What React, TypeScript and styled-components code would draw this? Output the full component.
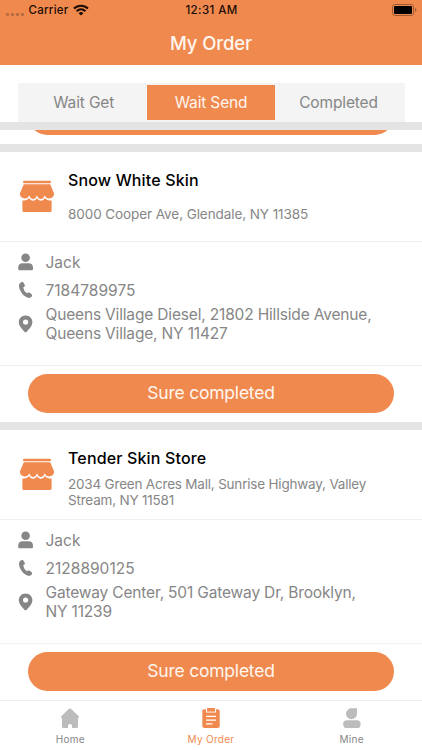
import React from "react";
import styled, { createGlobalStyle } from "styled-components";

const ORANGE = "#f0894e";
const GREY = "#868686";

const GlobalStyle = createGlobalStyle`
  * { box-sizing: border-box; }
  body { margin: 0; background: #fff; font-family: Inter, "Liberation Sans", sans-serif; }
`;

const Screen = styled.div`
  width: 422px;
  height: 750px;
  display: flex;
  flex-direction: column;
  overflow: hidden;
  background: #fff;
`;

const Header = styled.header`
  flex: none;
  height: 65px;
  background: ${ORANGE};
`;

const StatusBar = styled.div`
  height: 20px;
  padding: 0 5px 0 6px;
  display: grid;
  grid-template-columns: 1fr auto 1fr;
  align-items: center;
  font-size: 11.5px;
  font-weight: 500;
  line-height: 20px;
  color: #1c0d05;
`;

const Carrier = styled.div`
  display: flex;
  align-items: center;
  gap: 4.5px;
  letter-spacing: 0.25px;
`;

const Signal = styled.div`
  display: flex;
  gap: 2px;
  padding-top: 8px;
`;

const Dot = styled.i`
  width: 3px;
  height: 3px;
  border-radius: 1px;
  background: #b66c43;
`;

const Clock = styled.div`
  letter-spacing: 0.4px;
`;

const BatteryIcon = styled.svg`
  justify-self: end;
`;

const Title = styled.h1`
  margin: 0;
  height: 45px;
  line-height: 46px;
  text-align: center;
  font-size: 18.5px;
  font-weight: 500;
  letter-spacing: -0.1px;
  color: #fff6ee;
`;

const FilterArea = styled.div`
  flex: none;
  height: 57px;
  padding: 18px 17px 0 17.5px;
`;

const Filter = styled.div`
  height: 39px;
  padding: 1.5px 2.5px 2.5px;
  display: grid;
  grid-template-columns: repeat(3, 127.4px);
  background: #f4f4f4;
`;

const FilterTab = styled.button<{ $active?: boolean }>`
  border: 0;
  padding: 0;
  font-family: inherit;
  font-size: 15.5px;
  line-height: 35px;
  letter-spacing: -0.15px;
  color: ${(p) => (p.$active ? "#fff6ee" : GREY)};
  background: ${(p) => (p.$active ? ORANGE : "transparent")};
`;

const List = styled.main`
  flex: 1;
  min-height: 0;
  overflow: hidden;
`;

const Separator = styled.div`
  height: 8px;
  background: #e4e4e4;
`;

const ScrolledCard = styled.div`
  height: 14px;
  display: flex;
  align-items: flex-end;
  padding: 0 28px 9px;
  overflow: hidden;
`;

const Action = styled.button`
  flex: 1;
  height: 39px;
  border: 0;
  border-radius: 20px;
  padding: 0;
  background: ${ORANGE};
  color: #fff6ee;
  font-family: inherit;
  font-size: 17.5px;
  line-height: 38px;
  letter-spacing: -0.22px;
`;

const Card = styled.article`
  height: 269.7px;
`;

const Store = styled.div`
  height: 89.9px;
  padding: 0 18px;
  display: grid;
  grid-template-columns: 50px 1fr;
  border-bottom: 1px solid #f0f0f0;
`;

const StoreIcon = styled.svg`
  margin: 28px 0 0 1px;
`;

const StoreName = styled.h2`
  margin: 17px 0 0;
  font-size: 16px;
  font-weight: 500;
  line-height: 22px;
  letter-spacing: 0.15px;
  color: #000;
`;

const StoreAddress = styled.div<{ $tight?: boolean }>`
  height: 34px;
  margin-top: 6.3px;
  display: flex;
  flex-direction: column;
  justify-content: center;
  font-size: 13.5px;
  line-height: 16.3px;
  letter-spacing: ${(p) => (p.$tight ? "-0.2px" : "-0.08px")};
  color: ${GREY};
  white-space: nowrap;
`;

const Contact = styled.div`
  height: 124px;
  padding: 6.6px 18px 0;
  border-bottom: 1px solid #f0f0f0;
`;

const ContactRow = styled.div<{ $tall?: boolean }>`
  height: ${(p) => (p.$tall ? "39px" : "28px")};
  display: grid;
  grid-template-columns: 27.5px 1fr;
  align-items: center;
  font-size: 15.5px;
  line-height: 19px;
  letter-spacing: ${(p) => (p.$tall ? "-0.17px" : "0.02px")};
  color: ${GREY};
  white-space: nowrap;
`;

const Footer = styled.div`
  display: flex;
  padding: 8.1px 28px 0;
`;

const TabBar = styled.nav`
  flex: none;
  height: 50px;
  display: grid;
  grid-template-columns: repeat(3, 1fr);
  border-top: 1px solid #efeff1;
  background: #fff;
`;

const TabItem = styled.a<{ $active?: boolean }>`
  display: flex;
  flex-direction: column;
  align-items: center;
  padding-top: 7px;
  font-size: 10px;
  line-height: 14px;
  letter-spacing: 0.3px;
  color: ${(p) => (p.$active ? ORANGE : GREY)};

  svg { margin-bottom: 3px; }
`;

const Shop = () => (
  <StoreIcon width="36" height="33" viewBox="0 0 36 33" fill={ORANGE}>
    <rect x="4" y="0.7" width="28" height="2.6" rx="1.2" />
    <path d="M4.8 4.3H31.2L35 13.3C35.3 16.5 32.8 18.5 30.2 18.5C28.2 18.5 26.5 17.4 25.8 15.2C25 17.6 23.6 19 21.8 19C20.1 19 18.7 17.6 18 15.2C17.3 17.6 15.9 19 14.2 19C12.4 19 11 17.6 10.2 15.2C9.5 17.4 7.8 18.5 5.8 18.5C3.2 18.5.7 16.5 1 13.3Z" />
    <path d="M3.4 20.4C6.4 21 8.6 20 10.2 18.1C12 21.6 16.2 21.6 18 18.1C19.8 21.6 24 21.6 25.8 18.1C27.4 20 29.6 21 32.6 20.4V30.4Q32.6 32 31 32H5Q3.4 32 3.4 30.4Z" />
  </StoreIcon>
);

const Person = () => (
  <svg width="16" height="18" viewBox="0 0 16 18" fill={GREY}>
    <circle cx="7.6" cy="4.8" r="4.3" />
    <path d="M0.2 16V14.4C0.2 11.8 2 10.2 4.6 10.2H10.6C13.2 10.2 15 11.8 15 14.4V16Q15 17.3 13.8 17.3H1.4Q.2 17.3 .2 16Z" />
  </svg>
);

const Phone = () => (
  <svg width="16" height="18" viewBox="0 0 16 18" fill={GREY}>
    <path d="M2.1 2L3.7 1Q4.7.5 5.3 1.5L6.8 4Q7.3 5 6.4 5.6L5.2 6.5Q5.8 10 8.8 12.2L10.1 11.6Q11 11.1 11.8 11.8L13.8 13.5Q14.6 14.3 13.9 15.2C12.7 16.8 10.8 17.2 8.7 16.2C4.4 14.1.9 8.8 1 4.4Q1.1 2.7 2.1 2Z" />
  </svg>
);

const Pin = () => (
  <svg width="16" height="18" viewBox="0 0 16 18" fill={GREY}>
    <path fillRule="evenodd" d="M7.6.5C3.7.5.8 3.4.8 7.1C.8 10.8 3.8 14.1 6.7 16.9Q7.6 17.8 8.5 16.9C11.4 14.1 14.4 10.8 14.4 7.1C14.4 3.4 11.5.5 7.6.5ZM7.6 4.4A2.6 2.6 0 1 1 7.6 9.6A2.6 2.6 0 1 1 7.6 4.4Z" />
  </svg>
);

interface Order {
  store: string;
  storeAddress: string[];
  name: string;
  phone: string;
  address: string[];
}

const orders: Order[] = [
  {
    store: "Snow White Skin",
    storeAddress: ["8000 Cooper Ave, Glendale, NY 11385"],
    name: "Jack",
    phone: "7184789975",
    address: ["Queens Village Diesel, 21802 Hillside Avenue,", "Queens Village, NY 11427"],
  },
  {
    store: "Tender Skin Store",
    storeAddress: ["2034 Green Acres Mall, Sunrise Highway, Valley", "Stream, NY 11581"],
    name: "Jack",
    phone: "2128890125",
    address: ["Gateway Center, 501 Gateway Dr, Brooklyn,", "NY 11239"],
  },
];

const Lines = ({ text }: { text: string[] }) => (
  <div>
    {text.map((line) => (
      <div key={line}>{line}</div>
    ))}
  </div>
);

const OrderCard = ({ order }: { order: Order }) => (
  <Card>
    <Store>
      <Shop />
      <div>
        <StoreName>{order.store}</StoreName>
        <StoreAddress $tight={order.storeAddress.length > 1}>
          <Lines text={order.storeAddress} />
        </StoreAddress>
      </div>
    </Store>
    <Contact>
      <ContactRow>
        <Person />
        <span>{order.name}</span>
      </ContactRow>
      <ContactRow>
        <Phone />
        <span>{order.phone}</span>
      </ContactRow>
      <ContactRow $tall>
        <Pin />
        <Lines text={order.address} />
      </ContactRow>
    </Contact>
    <Footer>
      <Action>Sure completed</Action>
    </Footer>
  </Card>
);

export default function App() {
  return (
    <Screen>
      <GlobalStyle />
      <Header>
        <StatusBar>
          <Carrier>
            <Signal>
              <Dot /><Dot /><Dot /><Dot />
            </Signal>
            <span>Carrier</span>
            <svg width="16" height="12" viewBox="0 0 16 12" fill="none" stroke="#1c0d05" strokeWidth="2.1">
              <path d="M1 4.6C5 .7 11 .7 15 4.6" />
              <path d="M3.6 7.2C6.2 4.8 9.8 4.8 12.4 7.2" />
              <path d="M5.6 9.2Q8 7 10.4 9.2L8 11.6Z" fill="#1c0d05" stroke="none" />
            </svg>
          </Carrier>
          <Clock>12:31 AM</Clock>
          <BatteryIcon width="25" height="12" viewBox="0 0 25 12">
            <rect x="0.5" y="0.5" width="21" height="11" rx="2.6" fill="none" stroke="#9c5a35" />
            <rect x="2" y="2" width="18" height="8" rx="1.2" fill="#000" />
            <path d="M23 4Q24.5 4.6 24.5 6T23 8Z" fill="#9c5a35" />
          </BatteryIcon>
        </StatusBar>
        <Title>My Order</Title>
      </Header>
      <FilterArea>
        <Filter>
          <FilterTab>Wait Get</FilterTab>
          <FilterTab $active>Wait Send</FilterTab>
          <FilterTab>Completed</FilterTab>
        </Filter>
      </FilterArea>
      <List>
        <Separator />
        <ScrolledCard>
          <Action aria-label="Sure completed" />
        </ScrolledCard>
        <Separator />
        <OrderCard order={orders[0]} />
        <Separator />
        <OrderCard order={orders[1]} />
      </List>
      <TabBar>
        <TabItem>
          <svg width="20" height="21" viewBox="0 0 20 21" fill="#bcbcbc">
            <path d="M9.1.8Q10 .1 10.9.8L19 8.5Q19.7 9.5 18.5 9.7H18V18.5Q18 20 16.5 20H12V17.8Q12 16 10 16T8 17.8V20H3.5Q2 20 2 18.5V9.7H1.5Q.3 9.5 1 8.5Z" />
          </svg>
          Home
        </TabItem>
        <TabItem $active>
          <svg width="20" height="21" viewBox="0 0 20 21">
            <rect x="1.3" y="1.2" width="17.4" height="18.8" rx="2" fill={ORANGE} />
            <path d="M5.5 1V4H14.5V1" fill="none" stroke="#fff" strokeWidth="1.1" />
            <rect x="6" y="0" width="8" height="3.3" rx="0.6" fill={ORANGE} />
            <path d="M5 8.3H15M5 12.1H15M5 15.9H11.5" stroke="#fff" strokeWidth="1.3" />
          </svg>
          My Order
        </TabItem>
        <TabItem>
          <svg width="20" height="21" viewBox="0 0 20 21" fill="#bcbcbc">
            <path d="M10 .3H15V5.6A5.5 5.5 0 1 1 10 .3Z" />
            <rect x="1.2" y="12.2" width="17.4" height="7.8" rx="3.6" />
          </svg>
          Mine
        </TabItem>
      </TabBar>
    </Screen>
  );
}
